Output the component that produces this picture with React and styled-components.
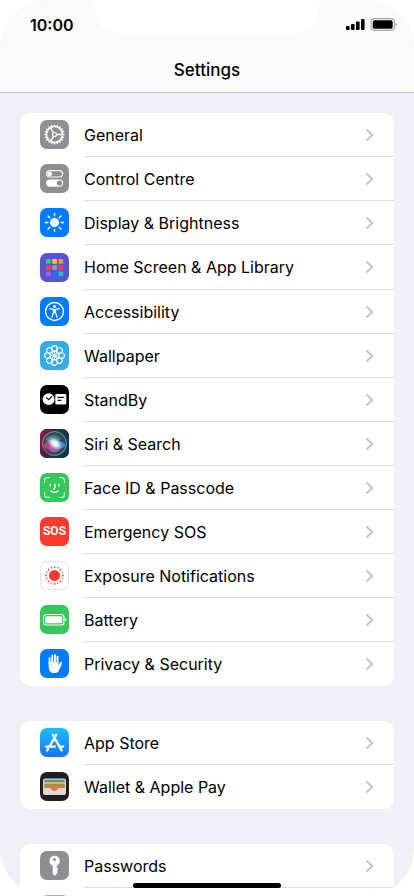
import React from 'react'
import styled, { createGlobalStyle } from 'styled-components'

const GlobalStyle = createGlobalStyle`
  * {
    box-sizing: border-box;
  }
  body {
    margin: 0;
    background: #fff;
    font-family: Inter, "Liberation Sans", sans-serif;
    color: #000;
  }
`;

const Screen = styled.div`
  position: relative;
  height: 100vh;
  overflow: hidden;
  border-radius: 48px;
  background: #f1f0f6;
`;

const Header = styled.header`
  background: #fbfbfb;
  border-bottom: 1px solid #c6c6c9;
`;

const StatusBar = styled.div`
  display: flex;
  justify-content: space-between;
  align-items: center;
  height: 48px;
  padding: 2px 17px 0 30px;
`;

const Time = styled.time`
  font-size: 16px;
  font-weight: 600;
  line-height: 20px;
`;

const Title = styled.h1`
  margin: 0;
  height: 44px;
  font-size: 17px;
  font-weight: 500;
  line-height: 44px;
  text-align: center;
`;

const Notch = styled.svg`
  position: absolute;
  top: 0;
  left: 50%;
  width: 236px;
  height: 34px;
  transform: translateX(-50%);
`;

const Groups = styled.main`
  display: flex;
  flex-direction: column;
  gap: 35px;
  padding: 20px 20px 0;
`;

const Group = styled.ul`
  margin: 0;
  padding: 0;
  list-style: none;
  border-radius: 10px;
  background: #fff;
  overflow: hidden;
`;

const Row = styled.a`
  display: flex;
  height: ${({ $tall }) => ($tall ? '45px' : '44px')};
  padding-left: 20px;
  gap: 15px;
  align-items: center;
  color: inherit;
  text-decoration: none;
`;

const RowBody = styled.span`
  display: flex;
  flex: 1;
  align-self: stretch;
  align-items: center;
  justify-content: space-between;
  padding-right: 20px;
  border-bottom: 1px solid #dededf;

  li:last-child & {
    border-bottom-color: transparent;
  }
`;

const Label = styled.span`
  font-size: 16px;
  line-height: 22px;
`;

const Tile = styled.span`
  display: flex;
  flex: none;
  align-items: center;
  justify-content: center;
  width: 29px;
  height: 29px;
  margin-bottom: 1px;
  border-radius: 7px;
  overflow: hidden;
  background: ${({ $bg }) => $bg};
  box-shadow: ${({ $outlined }) => ($outlined ? 'inset 0 0 0 1px #e3e3e5' : 'none')};

  svg {
    display: block;
  }
`;

const SosText = styled.span`
  color: #fff;
  font-family: Roboto, "Liberation Sans", sans-serif;
  font-size: 12px;
  font-weight: 700;
  line-height: 29px;
`;

const HomeBar = styled.div`
  position: absolute;
  bottom: 8px;
  left: 50%;
  width: 148px;
  height: 5px;
  border-radius: 3px;
  background: #000;
  transform: translateX(-50%);
`;

const Glyph = ({ children }) => (
  <svg width="29" height="29" viewBox="0 0 29 29" fill="none" aria-hidden="true">
    {children}
  </svg>
)

const turns = (count) => Array.from({ length: count }, (_, i) => (i * 360) / count)

const GearIcon = () => (
  <Glyph>
    <g stroke="#fff">
      <circle cx="14.5" cy="14.5" r="8" strokeWidth="1.6" />
      <circle cx="14.5" cy="14.5" r="2" strokeWidth="1.2" />
      {turns(20).map((a) => (
        <path key={a} d="M14.5 6.5V4.4" strokeWidth="1.5" transform={`rotate(${a} 14.5 14.5)`} />
      ))}
      {[90, 210, 330].map((a) => (
        <path key={a} d="M14.5 12.5V6.5" strokeWidth="1.4" transform={`rotate(${a} 14.5 14.5)`} />
      ))}
    </g>
  </Glyph>
)

const SwitchesIcon = () => (
  <Glyph>
    <rect x="6.6" y="6.6" width="16" height="6.4" rx="3.2" stroke="#fff" strokeWidth="1.2" />
    <circle cx="9.8" cy="9.8" r="2.4" fill="#fff" />
    <rect x="6" y="15.4" width="17.2" height="7.4" rx="3.7" fill="#fff" />
    <circle cx="19.5" cy="19.1" r="2.7" fill="#8e8e93" />
  </Glyph>
)

const SunIcon = () => (
  <Glyph>
    <circle cx="14.5" cy="14.5" r="4.5" fill="#fff" />
    {turns(8).map((a) => (
      <path key={a} d="M14.5 7.9V5.4" stroke="#fff" strokeWidth="1.4" strokeLinecap="round" transform={`rotate(${a} 14.5 14.5)`} />
    ))}
  </Glyph>
)

const gridColors = ['#3fc07a', '#f5c33b', '#f29a38', '#f0443e', '#9d93b4', '#ec3c62', '#b458e0', '#1677f5', '#22b7c9']

const AppGridIcon = () => (
  <Glyph>
    {gridColors.map((color, i) => (
      <rect key={color} x={6 + (i % 3) * 6.2} y={6 + Math.floor(i / 3) * 6.2} width="4.8" height="4.8" rx="1" fill={color} />
    ))}
  </Glyph>
)

const PersonIcon = () => (
  <Glyph>
    <circle cx="14.5" cy="14.5" r="9" stroke="#fff" strokeWidth="1.4" />
    <circle cx="14.5" cy="9.4" r="1.5" fill="#fff" />
    <path
      d="M9.6 11.7l3.8.7v3l-1.400 5M19.4 11.7l-3.8.7v3l1.400 5"
      stroke="#fff" strokeWidth="1.2" strokeLinecap="round" strokeLinejoin="round"
    />
    <path d="M13.1 11.9h2.8v4.4h-2.8z" fill="#fff" />
  </Glyph>
)

const FlowerIcon = () => (
  <Glyph>
    <g stroke="#fff" strokeWidth="1.1">
      {turns(8).map((a) => (
        <g key={a} transform={`rotate(${a} 14.5 14.5)`}>
          <circle cx="14.5" cy="7.4" r="2.8" />
          <path d="M14.5 10.2v2.6" />
        </g>
      ))}
      <circle cx="14.5" cy="14.5" r="4.2" strokeWidth="0.9" />
    </g>
    <circle cx="14.5" cy="14.5" r="1.6" fill="#fff" />
  </Glyph>
)

const StandByIcon = () => (
  <Glyph>
    <circle cx="8.6" cy="14.2" r="5.9" fill="#fff" />
    <path d="M6.3 12.6l2.5 2.1 3-3.3" stroke="#000" strokeWidth="1.1" strokeLinecap="round" />
    <rect x="15.3" y="9" width="11" height="10.4" rx="1.4" fill="#fff" />
    <path d="M17.6 12.4h6.2M17.6 15.3h3.7" stroke="#000" strokeWidth="1.2" />
  </Glyph>
)

const SiriIcon = () => (
  <Glyph>
    <defs>
      <linearGradient id="siriBack" x1="0" y1="0" x2="1" y2="0.3">
        <stop offset="0" stopColor="#a0184c" />
        <stop offset="0.4" stopColor="#3d2440" />
        <stop offset="0.65" stopColor="#12403f" />
        <stop offset="1" stopColor="#0c3350" />
      </linearGradient>
      <radialGradient id="siriGlow">
        <stop offset="0" stopColor="#fff" />
        <stop offset="0.4" stopColor="#eef7fb" stopOpacity="0.9" />
        <stop offset="1" stopColor="#8fd3e6" stopOpacity="0" />
      </radialGradient>
      <linearGradient id="siriRing" x1="0" y1="1" x2="1" y2="0">
        <stop offset="0" stopColor="#e0467f" />
        <stop offset="0.5" stopColor="#66d0a8" />
        <stop offset="1" stopColor="#3aa98f" />
      </linearGradient>
    </defs>
    <rect width="29" height="29" fill="url(#siriBack)" />
    <circle cx="14.5" cy="14.5" r="12" fill="#474a63" fillOpacity="0.7" stroke="url(#siriRing)" strokeWidth="0.9" />
    <path d="M3.5 17c3-6 7-8 11-2.5c-3 5-7 8-11 2.5z" fill="#e2407d" fillOpacity="0.8" />
    <path d="M5 11c4-6 12-7 16-1l-6.5 6z" fill="#4ba591" fillOpacity="0.6" />
    <path d="M14 14.5c4-3 8-3 11.5 1c-2 5-8 6-11.5-1z" fill="#2f9df0" fillOpacity="0.8" />
    <path d="M8 20c4 5 10 4 13-1l-6-5z" fill="#b567bd" fillOpacity="0.8" />
    <ellipse cx="15" cy="14.5" rx="9" ry="6" fill="url(#siriGlow)" transform="rotate(35 15 14.5)" />
  </Glyph>
)

const FaceIcon = () => (
  <Glyph>
    <g stroke="#fff" strokeWidth="1.2" strokeLinecap="round" strokeLinejoin="round">
      <path strokeOpacity="0.8" d="M4.6 9.6V7.2a2.6 2.6 0 0 1 2.6-2.6H9.6M19.4 4.6h2.4a2.6 2.6 0 0 1 2.6 2.6v2.4M24.4 19.4v2.4a2.6 2.6 0 0 1-2.6 2.6h-2.4M9.6 24.4H7.2a2.6 2.6 0 0 1-2.6-2.6v-2.4" />
      <path strokeWidth="1.4" d="M10.3 11.2v1.8M18.9 11.2v1.8M14.9 11.2v3.7q0 1-1.2 1M10.9 18q3.6 2.7 7.2 0" />
    </g>
  </Glyph>
)

const ExposureIcon = () => (
  <Glyph>
    <circle cx="14.5" cy="14.5" r="5.5" fill="#ff3b30" />
    {turns(16).map((a) => (
      <circle key={a} cx="14.5" cy="6.1" r={a % 45 === 0 ? 0.9 : 0.7} fill="#ff3b30" transform={`rotate(${a} 14.5 14.5)`} />
    ))}
  </Glyph>
)

const BatteryIcon = () => (
  <Glyph>
    <rect x="3.5" y="9.5" width="20.5" height="10.5" rx="3" stroke="#fff" strokeWidth="1.1" />
    <rect x="5.2" y="11.2" width="17.1" height="7.1" rx="1.6" fill="#fff" />
    <path d="M25.2 13v3.6q1.2-.5 1.2-1.8t-1.2-1.8z" fill="#fff" />
  </Glyph>
)

const HandIcon = () => (
  <Glyph>
    <g stroke="#fff" strokeLinecap="round" strokeWidth="1.9">
      <path d="M9.6 15V9.3M12.2 14V6.8M14.9 14V6M17.5 14V7.6" />
    </g>
    <path
      d="M8.65 13.2h9.8v3.2l1.8-3c.6-1 2-.6 1.8.5-.7 2.6-1.8 4.900-2.9 7-1 2.2-2.5 3.2-4.9 3.2-3.9 0-5.6-2.6-5.6-6.4z"
      fill="#fff"
    />
  </Glyph>
)

const AppStoreIcon = () => (
  <Glyph>
    <g stroke="#fff" strokeWidth="2.3" strokeLinecap="round">
      <path d="M16.2 6.8L9.5 18.5M12.7 6.8l8.9 15.6M6 18.6h8.9M19.3 18.6h3.8M8 21l-.8 1.4" />
    </g>
  </Glyph>
)

const WalletIcon = () => (
  <Glyph>
    <rect x="3" y="6.5" width="23" height="16.5" rx="2" fill="#dcd8cd" />
    <path d="M4.2 10V9a1.2 1.2 0 0 1 1.2-1.2h18.2A1.2 1.2 0 0 1 24.8 9v1z" fill="#4292b8" />
    <path d="M4.2 9.9h20.6v2.4H4.2z" fill="#f0b63a" />
    <path d="M4.2 12h20.6v2.3H4.2z" fill="#71aa45" />
    <path d="M4.2 14.1h20.6v1.8h-5.500c-1.6 0-1.9 3-4.8 3s-3.2-3-4.800-3H4.2z" fill="#ef6b5b" />
  </Glyph>
)

const KeyIcon = () => (
  <Glyph>
    <path
      fillRule="evenodd"
      d="M14.5 4.8a5.2 5.2 0 0 1 2.3 9.9v2l1.4 1.4-1.4 1.5 1.3 1.4-3.2 3.9-2.2-2.2v-8a5.2 5.2 0 0 1 1.8-10zM14.5 6.9a1.5 1.5 0 1 0 0 3 1.5 1.5 0 0 0 0-3z"
      fill="#fff"
    />
  </Glyph>
)

const Chevron = () => (
  <svg width="9" height="14" viewBox="0 0 9 14" fill="none" aria-hidden="true">
    <path d="M1.5 1.5L7.2 7l-5.7 5.5" stroke="#c4c4c6" strokeWidth="1.9" />
  </svg>
)

const StatusIcons = () => (
  <svg width="51" height="14" viewBox="0 0 51 14" fill="none" aria-label="Signal and battery">
    <rect x="0" y="8" width="3.6" height="4" rx="1" fill="#000" />
    <rect x="5" y="6" width="3.6" height="6" rx="1" fill="#000" />
    <rect x="10" y="3.5" width="3.6" height="8.5" rx="1" fill="#000" />
    <rect x="15" y="1" width="3.6" height="11" rx="1" fill="#000" />
    <rect x="25" y="0.6" width="23.5" height="11.8" rx="3.3" stroke="#a6a6a6" strokeWidth="1.1" />
    <rect x="26.7" y="2.2" width="20" height="8.6" rx="1.8" fill="#000" />
    <path d="M49.6 4.8v3.6q1.3-.5 1.3-1.8t-1.3-1.8z" fill="#999" />
  </svg>
)

const settingsGroups = [
  [
    { label: 'General', bg: '#8e8e93', icon: <GearIcon /> },
    { label: 'Control Centre', bg: '#8e8e93', icon: <SwitchesIcon /> },
    { label: 'Display & Brightness', bg: '#007aff', icon: <SunIcon /> },
    { label: 'Home Screen & App Library', bg: '#5856ce', icon: <AppGridIcon />, tall: true },
    { label: 'Accessibility', bg: '#007aff', icon: <PersonIcon /> },
    { label: 'Wallpaper', bg: '#32ade6', icon: <FlowerIcon /> },
    { label: 'StandBy', bg: '#000', icon: <StandByIcon /> },
    { label: 'Siri & Search', bg: '#222', icon: <SiriIcon /> },
    { label: 'Face ID & Passcode', bg: '#34c759', icon: <FaceIcon /> },
    { label: 'Emergency SOS', bg: '#ff3b30', icon: <SosText>SOS</SosText> },
    { label: 'Exposure Notifications', bg: '#fff', icon: <ExposureIcon />, outlined: true },
    { label: 'Battery', bg: '#34c759', icon: <BatteryIcon /> },
    { label: 'Privacy & Security', bg: '#007aff', icon: <HandIcon /> },
  ],
  [
    { label: 'App Store', bg: 'linear-gradient(#1cc0fb, #1d72f1)', icon: <AppStoreIcon /> },
    { label: 'Wallet & Apple Pay', bg: '#1f1f1f', icon: <WalletIcon /> },
  ],
  [
    { label: 'Passwords', bg: '#8e8e93', icon: <KeyIcon /> },
    { bg: '#8fb2cc' },
  ],
]

const SettingsRow = ({ item }) => (
  <li>
    <Row href="#" $tall={item.tall}>
      <Tile $bg={item.bg} $outlined={item.outlined}>{item.icon}</Tile>
      <RowBody>
        <Label>{item.label}</Label>
        <Chevron />
      </RowBody>
    </Row>
  </li>
)

const App = () => {
  return (
    <>
      <GlobalStyle />
      <Screen>
        <Header>
          <StatusBar>
            <Time>10:00</Time>
            <StatusIcons />
          </StatusBar>
          <Title>Settings</Title>
        </Header>
        <Groups>
          {settingsGroups.map((items, index) => (
            <Group key={index}>
              {items.map((item, i) => (
                <SettingsRow item={item} key={i} />
              ))}
            </Group>
          ))}
        </Groups>
        <Notch viewBox="0 0 236 34" aria-hidden="true">
          <path d="M0 0C5 0 6.5 3 6.5 8C7 24 15 33 31 33H205C221 33 229 24 229.5 8C229.5 3 231 0 236 0z" fill="#fff" />
        </Notch>
        <HomeBar />
      </Screen>
    </>
  )
}

export default App
